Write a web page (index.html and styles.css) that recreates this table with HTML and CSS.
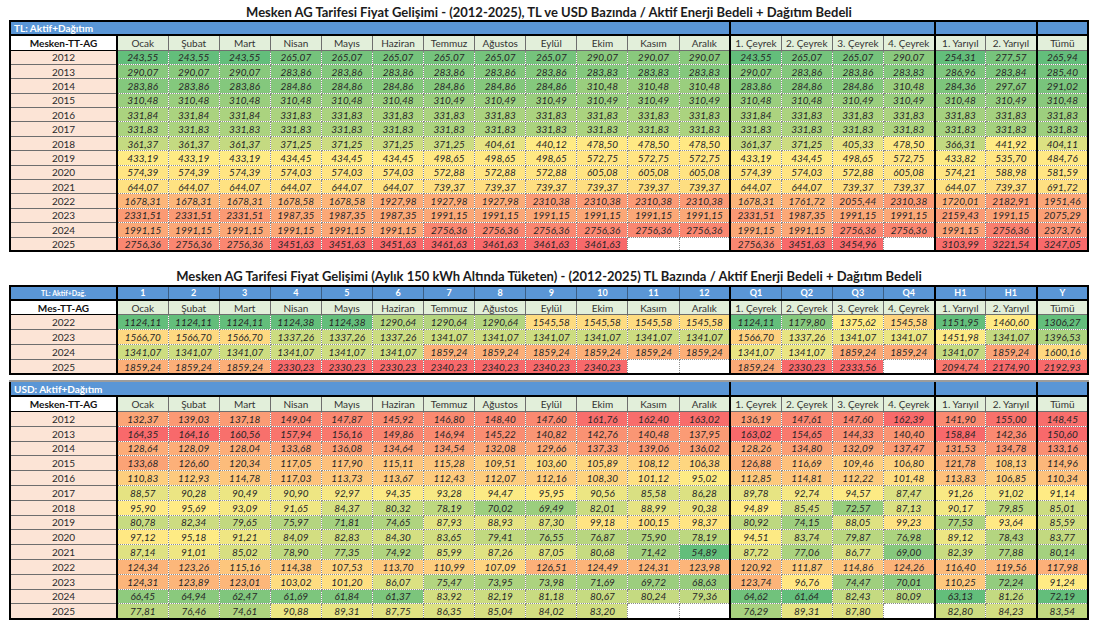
FILE: index.html
```html
<!DOCTYPE html>
<html lang="tr">
<head>
<meta charset="utf-8">
<title>Mesken AG Tarifesi Fiyat Gelişimi</title>
<link rel="stylesheet" href="styles.css">
</head>
<body>
<div class="page">
  <div class="title">Mesken AG Tarifesi Fiyat Gelişimi - (2012-2025), TL ve USD Bazında / Aktif Enerji Bedeli + Dağıtım Bedeli</div>
  <table class="sheet sheet-tl" id="t1"></table>
  <div class="title title-2">Mesken AG Tarifesi Fiyat Gelişimi (Aylık 150 kWh Altında Tüketen) - (2012-2025) TL Bazında / Aktif Enerji Bedeli + Dağıtım Bedeli</div>
  <table class="sheet sheet-150" id="t2"></table>
  <table class="sheet sheet-usd" id="t3"></table>
</div>
<script src="script.js"></script>
</body>
</html>
```

FILE: styles.css
```css
* { box-sizing: border-box; }
body {
  margin: 0;
  background: #ffffff;
  font-family: "Lato", "Open Sans", sans-serif;
  color: #2a2a2a;
}
.page {
  width: 1105px;
  padding: 4px 0 0 9px;
}
.title {
  width: 1080px;
  text-align: center;
  font-weight: 700;
  font-size: 13px;
  line-height: 16px;
  color: #1b1b1b;
}
.title-2 { margin-top: 16px; margin-bottom: 1px; }

.sheet {
  width: 1080px;
  table-layout: fixed;
  border-collapse: collapse;
  border: 2px solid #000;
}
.sheet col.c0 { width: 107px; }
.sheet td {
  padding: 0;
  text-align: center;
  font-size: 10px;
  line-height: 12px;
  white-space: nowrap;
  overflow: hidden;
}
.sheet-usd { margin-top: 5px; border-top-color: #9c9c9c; }

/* blue band */
.band td {
  height: 14px;
  background: #5a96d6;
  color: #ffffff;
  border-top: 2px solid #000;
  border-bottom: 2px solid #000;
  border-left: 1px solid #3c5f86;
  border-right: 1px solid #3c5f86;
}
.band td.band-label {
  text-align: left;
  padding-left: 3px;
  font-weight: 700;
  font-size: 10px;
}
.band td.band-small { font-size: 7px; font-weight: 700; }
.band td.band-num { font-weight: 700; font-size: 9px; }
.sheet-usd .band td { height: 15px; border-top-color: #9c9c9c; }

/* header row */
.head td {
  height: 15px;
  background: #e2efda;
  color: #333;
  border: 1px solid #6e6e6e;
}
.head td.corner {
  background: #ffffff;
  color: #111;
  font-weight: 700;
  border: 1px solid #000;
}
.sheet-150 .head td { height: 14px; }

/* data rows */
.row td {
  height: 14.4px;
  border: 1px dotted #8a8a8a;
  font-style: italic;
  color: #262626;
}
.sheet-150 .row td { height: 15px; }
.sheet-usd .row td { height: 14.8px; }
.row td.yr {
  background: #fce4d6;
  font-style: normal;
  color: #2a2a2a;
  border: 1px solid #6e6e6e;
}
.row td.empty { background: #ffffff; }

.sheet td.yr, .sheet td.corner, .sheet .band td.first { border-right: 2px solid #000; }
.sheet td.sep { border-left: 2px solid #000; }
```

FILE: script.js
```js
(function () {
  var MONTHS = ["Ocak","Şubat","Mart","Nisan","Mayıs","Haziran","Temmuz","Ağustos","Eylül","Ekim","Kasım","Aralık"];
  var REST = ["1. Çeyrek","2. Çeyrek","3. Çeyrek","4. Çeyrek","1. Yarıyıl","2. Yarıyıl","Tümü"];
  var HEAD = MONTHS.concat(REST);
  var SECT = [[0,12],[12,16],[16,18],[18,19]];
  var G = [99,190,123], Y = [255,235,132], R = [248,105,107];

  function rep(v, n) { var a = []; for (var i = 0; i < n; i++) a.push(v); return a.join(" "); }

  var T1 = [
    ["2012","243,55 243,55 243,55 265,07 265,07 265,07 265,07 265,07 265,07 290,07 290,07 290,07 243,55 265,07 265,07 290,07 254,31 277,57 265,94"],
    ["2013","290,07 290,07 290,07 283,86 283,86 283,86 283,86 283,86 283,86 283,83 283,83 283,83 290,07 283,86 283,86 283,83 286,96 283,84 285,40"],
    ["2014","283,86 283,86 283,86 284,86 284,86 284,86 284,86 284,86 284,86 310,48 310,48 310,48 283,86 284,86 284,86 310,48 284,36 297,67 291,02"],
    ["2015","310,48 310,48 310,48 310,48 310,48 310,48 310,49 310,49 310,49 310,49 310,49 310,49 310,48 310,48 310,49 310,49 310,48 310,49 310,48"],
    ["2016","331,84 331,84 331,84 331,83 331,83 331,83 331,83 331,83 331,83 331,83 331,83 331,83 331,84 331,83 331,83 331,83 331,83 331,83 331,83"],
    ["2017", rep("331,83", 19)],
    ["2018","361,37 361,37 361,37 371,25 371,25 371,25 371,25 404,61 440,12 478,50 478,50 478,50 361,37 371,25 405,33 478,50 366,31 441,92 404,11"],
    ["2019","433,19 433,19 433,19 434,45 434,45 434,45 498,65 498,65 498,65 572,75 572,75 572,75 433,19 434,45 498,65 572,75 433,82 535,70 484,76"],
    ["2020","574,39 574,39 574,39 574,03 574,03 574,03 572,88 572,88 572,88 605,08 605,08 605,08 574,39 574,03 572,88 605,08 574,21 588,98 581,59"],
    ["2021","644,07 644,07 644,07 644,07 644,07 644,07 739,37 739,37 739,37 739,37 739,37 739,37 644,07 644,07 739,37 739,37 644,07 739,37 691,72"],
    ["2022","1678,31 1678,31 1678,31 1678,58 1678,58 1927,98 1927,98 1927,98 2310,38 2310,38 2310,38 2310,38 1678,31 1761,72 2055,44 2310,38 1720,01 2182,91 1951,46"],
    ["2023","2331,51 2331,51 2331,51 1987,35 1987,35 1987,35 1991,15 1991,15 1991,15 1991,15 1991,15 1991,15 2331,51 1987,35 1991,15 1991,15 2159,43 1991,15 2075,29"],
    ["2024","1991,15 1991,15 1991,15 1991,15 1991,15 1991,15 2756,36 2756,36 2756,36 2756,36 2756,36 2756,36 1991,15 1991,15 2756,36 2756,36 1991,15 2756,36 2373,76"],
    ["2025","2756,36 2756,36 2756,36 3451,63 3451,63 3451,63 3461,63 3461,63 3461,63 3461,63 - - 2756,36 3451,63 3454,96 - 3103,99 3221,54 3247,05"]
  ];

  var T2 = [
    ["2022","1124,11 1124,11 1124,11 1124,38 1124,38 1290,64 1290,64 1290,64 1545,58 1545,58 1545,58 1545,58 1124,11 1179,80 1375,62 1545,58 1151,95 1460,60 1306,27"],
    ["2023","1566,70 1566,70 1566,70 1337,26 1337,26 1337,26 1341,07 1341,07 1341,07 1341,07 1341,07 1341,07 1566,70 1337,26 1341,07 1341,07 1451,98 1341,07 1396,53"],
    ["2024","1341,07 1341,07 1341,07 1341,07 1341,07 1341,07 1859,24 1859,24 1859,24 1859,24 1859,24 1859,24 1341,07 1341,07 1859,24 1859,24 1341,07 1859,24 1600,16"],
    ["2025","1859,24 1859,24 1859,24 2330,23 2330,23 2330,23 2340,23 2340,23 2340,23 2340,23 - - 1859,24 2330,23 2333,56 - 2094,74 2174,90 2192,93"]
  ];

  var T3 = [
    ["2012","132,37 139,03 137,18 149,04 147,87 145,92 146,80 148,40 147,60 161,76 162,40 163,02 136,19 147,61 147,60 162,39 141,90 155,00 148,45"],
    ["2013","164,35 164,16 160,56 157,94 156,16 149,86 146,94 145,22 140,82 142,76 140,48 137,95 163,02 154,65 144,33 140,40 158,84 142,36 150,60"],
    ["2014","128,64 128,09 128,04 133,68 136,08 134,64 134,54 132,08 129,66 137,33 139,06 136,02 128,26 134,80 132,09 137,47 131,53 134,78 133,16"],
    ["2015","133,68 126,60 120,34 117,05 117,90 115,11 115,28 109,51 103,60 105,89 108,12 106,38 126,88 116,69 109,46 106,80 121,78 108,13 114,96"],
    ["2016","110,83 112,93 114,78 117,03 113,73 113,67 112,43 112,07 112,16 108,30 101,12 95,02 112,85 114,81 112,22 101,48 113,83 106,85 110,34"],
    ["2017","88,57 90,28 90,49 90,90 92,97 94,35 93,28 94,47 95,95 90,56 85,58 86,28 89,78 92,74 94,57 87,47 91,26 91,02 91,14"],
    ["2018","95,90 95,69 93,09 91,65 84,37 80,32 78,19 70,02 69,49 82,01 88,99 90,38 94,89 85,45 72,57 87,13 90,17 79,85 85,01"],
    ["2019","80,78 82,34 79,65 75,97 71,81 74,65 87,93 88,93 87,30 99,18 100,15 98,37 80,92 74,15 88,05 99,23 77,53 93,64 85,59"],
    ["2020","97,12 95,18 91,21 84,09 82,83 84,30 83,65 79,41 76,55 76,87 75,90 78,19 94,51 83,74 79,87 76,98 89,12 78,43 83,77"],
    ["2021","87,14 91,01 85,02 78,90 77,35 74,92 85,99 87,26 87,05 80,68 71,42 54,89 87,72 77,06 86,77 69,00 82,39 77,88 80,14"],
    ["2022","124,34 123,26 115,16 114,38 107,53 113,70 110,99 107,09 126,51 124,49 124,31 123,98 120,92 111,87 114,86 124,26 116,40 119,56 117,98"],
    ["2023","124,31 123,89 123,01 103,02 101,20 86,07 75,47 73,95 73,98 71,69 69,72 68,63 123,74 96,76 74,47 70,01 110,25 72,24 91,24"],
    ["2024","66,45 64,94 62,47 61,69 61,84 61,37 83,92 82,19 81,18 80,67 80,24 79,36 64,62 61,64 82,43 80,09 63,13 81,26 72,19"],
    ["2025","77,81 76,46 74,61 90,88 89,31 87,75 86,35 85,04 84,02 83,20 - - 76,29 89,31 87,80 - 82,80 84,23 83,54"]
  ];

  function parse(rows) {
    return rows.map(function (r) {
      return { year: r[0], cells: r[1].trim().split(/\s+/).map(function (x) { return x === "-" ? null : x; }) };
    });
  }
  function num(x) { return x == null ? null : parseFloat(x.replace(",", ".")); }
  function mix(a, b, t) {
    return "rgb(" + a.map(function (x, i) { return Math.round(x + (b[i] - x) * t); }).join(",") + ")";
  }
  function makeScale(vals) {
    var s = vals.filter(function (v) { return v != null; }).sort(function (a, b) { return a - b; });
    var min = s[0], max = s[s.length - 1];
    var pos = (s.length - 1) * 0.5, lo = Math.floor(pos), hi = Math.ceil(pos);
    var mid = s[lo] + (s[hi] - s[lo]) * (pos - lo);
    return function (v) {
      if (v <= mid) {
        var t = mid === min ? 1 : (v - min) / (mid - min);
        return mix(G, Y, t);
      }
      return mix(Y, R, max === mid ? 0 : (v - mid) / (max - mid));
    };
  }
  function isSep(i) { return i === 12 || i === 16 || i === 18; }

  function el(tag, cls, text) {
    var e = document.createElement(tag);
    if (cls) e.className = cls;
    if (text != null) e.textContent = text;
    return e;
  }

  function build(id, bandType, bandLabel, corner, raw) {
    var t = document.getElementById(id);
    var rows = parse(raw);
    var cg = el("colgroup");
    cg.appendChild(el("col", "c0"));
    for (var c = 0; c < 19; c++) cg.appendChild(el("col", "cn"));
    t.appendChild(cg);
    var tb = el("tbody");

    var band = el("tr", "band");
    if (bandType === "merged") {
      var a = el("td", "band-label", bandLabel); a.colSpan = 13; band.appendChild(a);
      var b = el("td", "sep"); b.colSpan = 4; band.appendChild(b);
      var d = el("td", "sep"); d.colSpan = 2; band.appendChild(d);
      band.appendChild(el("td", "sep"));
    } else {
      band.appendChild(el("td", "band-small first", bandLabel));
      var labels = ["1","2","3","4","5","6","7","8","9","10","11","12","Q1","Q2","Q3","Q4","H1","H1","Y"];
      labels.forEach(function (l, i) { band.appendChild(el("td", "band-num" + (isSep(i) ? " sep" : ""), l)); });
    }
    tb.appendChild(band);

    var head = el("tr", "head");
    head.appendChild(el("td", "corner", corner));
    HEAD.forEach(function (h, i) { head.appendChild(el("td", isSep(i) ? "sep" : "", h)); });
    tb.appendChild(head);

    var scales = SECT.map(function (s) {
      var vals = [];
      rows.forEach(function (r) { for (var i = s[0]; i < s[1]; i++) vals.push(num(r.cells[i])); });
      return makeScale(vals);
    });
    function scaleFor(i) { return i < 12 ? scales[0] : i < 16 ? scales[1] : i < 18 ? scales[2] : scales[3]; }

    rows.forEach(function (r) {
      var tr = el("tr", "row");
      tr.appendChild(el("td", "yr", r.year));
      r.cells.forEach(function (v, i) {
        var cls = (isSep(i) ? "sep " : "") + (v == null ? "empty" : "v");
        var td = el("td", cls, v == null ? "" : v);
        if (v != null) td.style.background = scaleFor(i)(num(v));
        tr.appendChild(td);
      });
      tb.appendChild(tr);
    });
    t.appendChild(tb);
  }

  build("t1", "merged", "TL: Aktif+Dağıtım", "Mesken-TT-AG", T1);
  build("t2", "numbered", "TL: Aktif+Dağ.", "Mes-TT-AG", T2);
  build("t3", "merged", "USD: Aktif+Dağıtım", "Mesken-TT-AG", T3);
})();
```
